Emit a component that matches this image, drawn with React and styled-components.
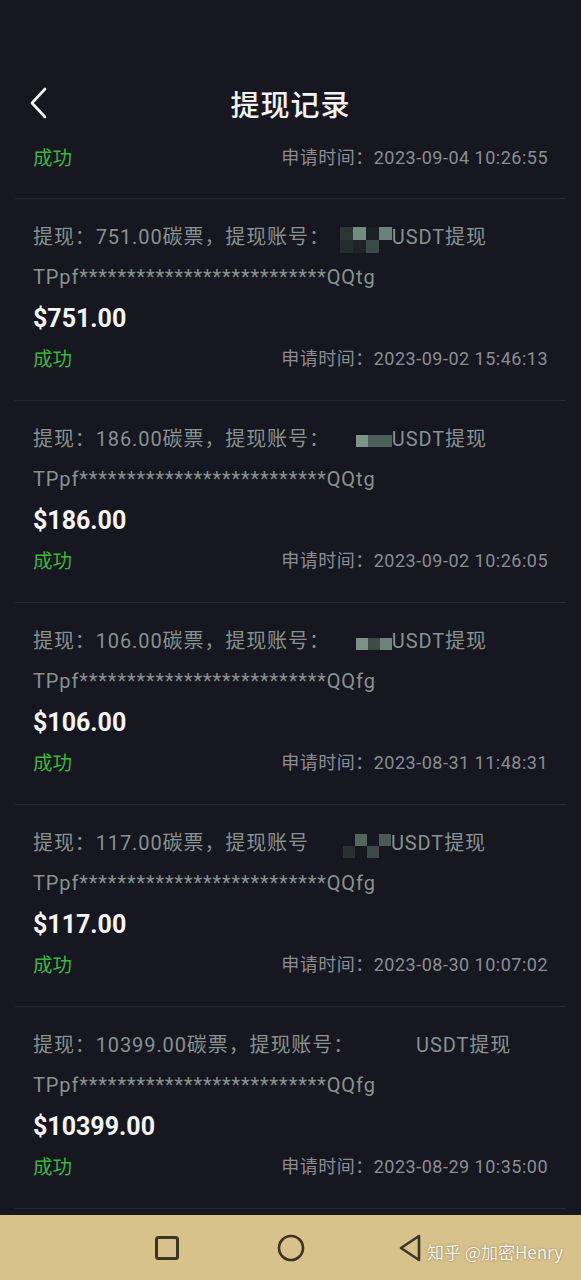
import React from 'react';
import styled, { createGlobalStyle } from 'styled-components';

const GlobalStyle = createGlobalStyle`
	html, body {
		margin: 0;
		padding: 0;
		background: #161721;
	}
	body {
		font-family: Roboto, "Noto Sans CJK SC", sans-serif;
	}
`;

const Screen = styled.div`
	width: 581px;
	height: 1280px;
	display: flex;
	flex-direction: column;
	background: #161721;
	overflow: hidden;
`;

const Header = styled.div`
	height: 46px;
	margin: 80px 0 11px;
	display: flex;
	align-items: center;
	justify-content: center;
	position: relative;
	flex-shrink: 0;
`;

const BackButton = styled.button`
	position: absolute;
	left: 24px;
	top: 50%;
	transform: translateY(-50%);
	background: none;
	border: none;
	padding: 4px;
	display: flex;
	color: #f4f4f4;
`;

const Title = styled.h1`
	margin: 0;
	font-family: "Noto Sans CJK SC", sans-serif;
	font-size: 29px;
	font-weight: 500;
	color: #f4f4f4;
	letter-spacing: 1px;
`;

const List = styled.div`
	flex: 1;
	padding: 0 15px;
	overflow: hidden;
`;

const Card = styled.div`
	padding: ${(p) => (p.$partial ? '0 18px 23px' : '18px 18px 27px')};
	border-bottom: 1px solid #252733;
`;

const InfoLine = styled.div`
	height: 40px;
	line-height: 40px;
	font-size: 20px;
	letter-spacing: 0.9px;
	color: #88928d;
	white-space: nowrap;
	display: flex;
	align-items: center;
`;

const Amount = styled.div`
	height: 44px;
	line-height: 44px;
	font-size: 25px;
	font-weight: 700;
	color: #f5f5f5;
`;

const StatusRow = styled.div`
	height: ${(p) => (p.$partial ? 38 : 32)}px;
	display: flex;
	align-items: center;
	justify-content: space-between;
`;

const Status = styled.span`
	font-family: "Noto Sans CJK SC", sans-serif;
	font-size: 19.5px;
	color: #3cb63a;
`;

const Time = styled.span`
	font-size: 18px;
	letter-spacing: 0.5px;
	color: #8a8d93;
`;

const Gap = styled.span`
	width: 20px;
`;

const MaskBox = styled.span`
	width: 62px;
	height: 40px;
	display: inline-flex;
	align-items: center;
	justify-content: flex-end;
`;

const MaskGrid = styled.span`
	display: grid;
	grid-template-columns: repeat(${(p) => p.$cols}, ${(p) => p.$cell}px);
	grid-auto-rows: ${(p) => p.$cell}px;
	margin-top: ${(p) => p.$offset || 0}px;
`;

const MaskCell = styled.span`
	background: ${(p) => p.$color};
`;

const NavBar = styled.div`
	height: 65px;
	flex-shrink: 0;
	margin-top: 6px;
	background: #d6c28a;
	display: grid;
	grid-template-columns: 124px 124px 124px;
	justify-content: center;
	align-items: center;
	justify-items: center;
	position: relative;
`;

const Watermark = styled.span`
	position: absolute;
	left: 427px;
	top: 24px;
	font-family: "Noto Sans CJK SC", sans-serif;
	font-size: 17px;
	color: #f7f3ea;
	text-shadow: 0 0 2px rgba(60, 50, 30, 0.6);
	white-space: nowrap;
`;

const masks = {
	a: {
		cols: 4,
		cell: 13,
		offset: 6,
		cells: ['#2b3532', '#718d80', '#1c2124', '#6a8277', '#262d2e', '#1f2527', '#3a4b45', 'transparent']
	},
	b: { cols: 3, cell: 12, offset: 4, cells: ['#7f9488', '#4c5f57', '#4c5f57'] },
	c: { cols: 3, cell: 12, offset: 6, cells: ['#7d9185', '#3e4b46', '#6e8278'] },
	d: {
		cols: 4,
		cell: 12,
		offset: 6,
		cells: ['transparent', '#55665e', 'transparent', '#4b5a54', '#283030', 'transparent', '#3c4a45', 'transparent']
	},
	e: { cols: 1, cell: 12, offset: 0, cells: ['transparent'] }
};

const records = [
	{ amount: '751.00', colon: '：', mask: 'a', last: 'QQtg', time: '2023-09-02 15:46:13' },
	{ amount: '186.00', colon: '：', mask: 'b', last: 'QQtg', time: '2023-09-02 10:26:05' },
	{ amount: '106.00', colon: '：', mask: 'c', last: 'QQfg', time: '2023-08-31 11:48:31' },
	{ amount: '117.00', colon: '', mask: 'd', last: 'QQfg', time: '2023-08-30 10:07:02' },
	{ amount: '10399.00', colon: '：', mask: 'e', last: 'QQfg', time: '2023-08-29 10:35:00' }
];

const Mask = ({ type }) => {
	const m = masks[type];
	return (
		<MaskBox>
			<MaskGrid $cols={m.cols} $cell={m.cell} $offset={m.offset}>
				{m.cells.map((c, i) => (
					<MaskCell key={i} $color={c} />
				))}
			</MaskGrid>
		</MaskBox>
	);
};

const StatusLine = ({ time, partial }) => (
	<StatusRow $partial={partial}>
		<Status>成功</Status>
		<Time>申请时间：{time}</Time>
	</StatusRow>
);

const App = () => {
	return (
		<>
			<GlobalStyle />
			<Screen>
				<Header>
					<BackButton type="button">
						<svg width="22" height="32" viewBox="0 0 22 32" fill="none">
							<polyline
								points="17,2 4,16 17,30"
								stroke="currentColor"
								strokeWidth="2.6"
								strokeLinecap="round"
								strokeLinejoin="round"
							/>
						</svg>
					</BackButton>
					<Title>提现记录</Title>
				</Header>
				<List>
					<Card $partial>
						<StatusLine partial time="2023-09-04 10:26:55" />
					</Card>
					{records.map((r) => (
						<Card key={r.time}>
							<InfoLine>
								提现：{r.amount}碳票，提现账号{r.colon}
								{r.colon ? null : <Gap />}
								<Mask type={r.mask} />
								USDT提现
							</InfoLine>
							<InfoLine>TPpf**************************{r.last}</InfoLine>
							<Amount>${r.amount}</Amount>
							<StatusLine time={r.time} />
						</Card>
					))}
				</List>
				<NavBar>
					<svg width="26" height="26" viewBox="0 0 26 26" fill="none">
						<rect x="2.5" y="2.5" width="21" height="21" rx="2" stroke="#3d3525" strokeWidth="3" />
					</svg>
					<svg width="30" height="30" viewBox="0 0 30 30" fill="none">
						<circle cx="15" cy="15" r="12" stroke="#3d3525" strokeWidth="2.6" />
					</svg>
					<svg width="26" height="30" viewBox="0 0 26 30" fill="none" style={{ marginLeft: -8 }}>
						<path d="M21 3 L3 15 L21 27 Z" stroke="#3d3525" strokeWidth="2.6" strokeLinejoin="round" />
					</svg>
					<Watermark>知乎 @加密Henry</Watermark>
				</NavBar>
			</Screen>
		</>
	);
};

export default App;
